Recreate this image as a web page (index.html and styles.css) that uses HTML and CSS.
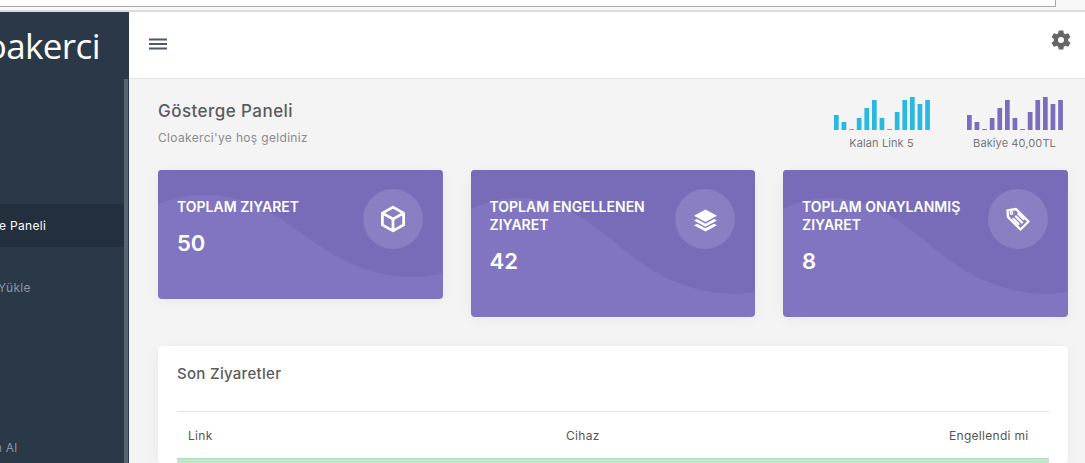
FILE: index.html
```html
<!DOCTYPE html>
<html lang="tr">
<head>
    <meta charset="UTF-8">
    <meta name="viewport" content="width=device-width, initial-scale=1.0">
    <title>Gösterge Paneli</title>
    <link rel="stylesheet" href="styles.css">
</head>
<body>
    <div class="url-strip"><div class="url-box"></div></div>
    <div class="app">
        <aside class="sidebar">
            <div class="sidebar-inner">
                <div class="logo">Cloakerci</div>
                <nav class="menu">
                    <a class="menu-item active" href="#">Gösterge Paneli</a>
                    <a class="menu-item" href="#">Bakiye Yükle</a>
                    <a class="menu-item menu-last" href="#">Link Satın Al</a>
                </nav>
            </div>
            <div class="scroll-thumb"></div>
        </aside>
        <div class="main">
            <header class="topbar">
                <svg class="menu-icon" viewBox="0 0 18 12" width="18" height="12">
                    <path d="M0 1.500h18M0 6h18M0 10.500h18" stroke="#4f5866" stroke-width="1.800"/>
                </svg>
                <svg class="gear-icon" viewBox="0 0 24 24" width="24" height="24">
                    <path fill="#666" fill-rule="evenodd" d="M19.140 12.940c.04-.3.06-.61.06-.94 0-.32-.02-.64-.07-.94l2.030-1.580a.49.49 0 0 0 .12-.61l-1.920-3.320a.49.49 0 0 0-.59-.22l-2.390.96c-.5-.38-1.030-.7-1.620-.94l-.36-2.540a.48.48 0 0 0-.48-.41h-3.840a.48.48 0 0 0-.47.41l-.36 2.540c-.59.24-1.130.57-1.620.94l-2.390-.96a.48.48 0 0 0-.59.22L2.740 8.870a.47.47 0 0 0 .12.61l2.030 1.580c-.05.3-.09.63-.09.94s.02.64.07.94l-2.030 1.580a.49.49 0 0 0-.12.61l1.920 3.320c.12.22.37.29.59.22l2.390-.96c.5.38 1.030.7 1.620.94l.36 2.540c.05.24.24.41.48.41h3.840c.24 0 .44-.17.47-.41l.36-2.540c.59-.24 1.130-.56 1.620-.94l2.390.96c.22.08.47 0 .59-.22l1.920-3.320a.47.47 0 0 0-.12-.61l-2.010-1.580zM12 15a3 3 0 1 1 0-6 3 3 0 0 1 0 6z"/>
                </svg>
            </header>
            <main class="content">
                <div class="page-head">
                    <div>
                        <h1 class="page-title">Gösterge Paneli</h1>
                        <p class="page-sub">Cloakerci'ye hoş geldiniz</p>
                    </div>
                    <div class="head-stats">
                        <div class="mini-stat">
                            <svg class="bars bars-blue" viewBox="0 0 96 33" width="96" height="33">
                                <path d="M0 18h4.700v15H0zM7.600 25h4.700v8H7.600zM15.200 32h4.700v1h-4.700zM22.800 21h4.700v12h-4.700zM30.400 11h4.700v22h-4.700zM38 3h4.700v30H38zM45.600 21h4.700v12h-4.700zM53.200 32h4.700v1h-4.700zM60.800 15h4.700v18h-4.700zM68.400 3h4.700v30h-4.700zM76 0h4.700v33H76zM83.600 7h4.700v26h-4.700zM91.200 3h4.700v30h-4.700z"/>
                            </svg>
                            <span class="mini-label">Kalan Link 5</span>
                        </div>
                        <div class="mini-stat">
                            <svg class="bars bars-purple" viewBox="0 0 96 33" width="96" height="33">
                                <path d="M0 18h4.700v15H0zM7.600 25h4.700v8H7.600zM15.200 32h4.700v1h-4.700zM22.800 21h4.700v12h-4.700zM30.400 11h4.700v22h-4.700zM38 3h4.700v30H38zM45.600 21h4.700v12h-4.700zM53.200 32h4.700v1h-4.700zM60.800 15h4.700v18h-4.700zM68.400 3h4.700v30h-4.700zM76 0h4.700v33H76zM83.600 7h4.700v26h-4.700zM91.200 3h4.700v30h-4.700z"/>
                            </svg>
                            <span class="mini-label">Bakiye 40,00TL</span>
                        </div>
                    </div>
                </div>

                <section class="cards">
                    <div class="card">
                        <svg class="wave" viewBox="0 0 284 129" preserveAspectRatio="none">
                            <path d="M0 34C25 24 50 22 75 28C120 38 145 70 185 90C215 105 250 112 284 103V0H0Z"/>
                        </svg>
                        <div class="card-text">
                            <h3 class="card-title">TOPLAM ZIYARET</h3>
                            <div class="card-value">50</div>
                        </div>
                        <div class="card-icon">
                            <svg viewBox="0 0 24 24" width="30" height="30" fill="none" stroke="#fff" stroke-width="2.200" stroke-linejoin="round">
                                <path d="M12 2.500l8.500 4.800v9.400L12 21.500l-8.500-4.800V7.300zM3.500 7.300L12 12l8.500-4.700M12 12v9.500"/>
                            </svg>
                        </div>
                    </div>
                    <div class="card">
                        <svg class="wave" viewBox="0 0 284 129" preserveAspectRatio="none">
                            <path d="M0 34C25 24 50 22 75 28C120 38 145 70 185 90C215 105 250 112 284 107V0H0Z"/>
                        </svg>
                        <div class="card-text">
                            <h3 class="card-title">TOPLAM ENGELLENEN ZIYARET</h3>
                            <div class="card-value">42</div>
                        </div>
                        <div class="card-icon">
                            <svg viewBox="0 0 24 24" width="25" height="25" fill="#fff">
                                <path d="M12 2.500L23 8.500l-11 6-11-6z"/>
                                <path d="M3.800 11.600L1 13l11 6 11-6-2.800-1.400L12 16z"/>
                                <path d="M3.800 16.100L1 17.500l11 6 11-6-2.800-1.400L12 20.500z"/>
                            </svg>
                        </div>
                    </div>
                    <div class="card">
                        <svg class="wave" viewBox="0 0 284 129" preserveAspectRatio="none">
                            <path d="M0 34C25 24 50 22 75 28C120 38 145 70 185 90C215 105 250 112 284 107V0H0Z"/>
                        </svg>
                        <div class="card-text">
                            <h3 class="card-title">TOPLAM ONAYLANMIŞ ZIYARET</h3>
                            <div class="card-value">8</div>
                        </div>
                        <div class="card-icon">
                            <svg viewBox="0 0 26 26" width="26" height="26" fill="none" stroke="#fff" stroke-width="2.400" stroke-linejoin="round" stroke-linecap="round">
                                <path d="M2.500 4.500l8.500-1.500 12.500 12.500-8 8L3 11z"/>
                                <path d="M11 10.500l6 6M8.500 13l5 5M13.500 8l5 5"/>
                                <circle cx="6.500" cy="7" r="0.700"/>
                            </svg>
                        </div>
                    </div>
                </section>

                <section class="panel">
                    <h4 class="panel-title">Son Ziyaretler</h4>
                    <table class="visits">
                        <thead>
                            <tr>
                                <th class="col-link">Link</th>
                                <th class="col-device">Cihaz</th>
                                <th class="col-blocked">Engellendi mi</th>
                            </tr>
                        </thead>
                        <tbody>
                            <tr class="row-ok"><td colspan="3"></td></tr>
                        </tbody>
                    </table>
                </section>
            </main>
        </div>
    </div>
</body>
</html>
```

FILE: styles.css
```css
html, body {
    height: 463px;
    overflow: hidden;
}
body {
    margin: 0;
    font-family: Inter, "Open Sans", sans-serif;
    background: #f4f4f4;
    color: #555;
}
.url-strip {
    height: 10px;
    background: #f8f8f8;
    border-bottom: 2px solid #dcdcdc;
}
.url-box {
    width: 1055px;
    height: 6px;
    background: #fff;
    border-bottom: 1px solid #a9a9a9;
    border-right: 1px solid #a9a9a9;
}
.app {
    display: flex;
    height: 451px;
}

/* sol menu */
.sidebar {
    position: relative;
    flex: 0 0 129px;
    background: #2a3848;
    overflow: hidden;
}
.sidebar-inner {
    margin-left: -79px;
    width: 204px;
}
.logo {
    font-family: "Open Sans", sans-serif;
    font-size: 35px;
    line-height: 48px;
    color: #fff;
    padding: 10px 0 0 35px;
    letter-spacing: -0.6px;
    white-space: nowrap;
}
.menu {
    display: flex;
    flex-direction: column;
    padding-top: 134px;
}
.menu-item {
    display: block;
    font-size: 12px;
    line-height: 43px;
    letter-spacing: 0.3px;
    color: #8b96a1;
    text-decoration: none;
    padding-left: 34px;
    white-space: nowrap;
}
.menu-item.active {
    color: #fff;
    background: #232f3c;
    padding-left: 31px;
}
.menu-item + .menu-item {
    margin-top: 19px;
}
.menu-item.menu-last {
    margin-top: 117px;
    padding-left: 23px;
}
.scroll-thumb {
    position: absolute;
    top: 67px;
    right: 0;
    bottom: 0;
    width: 5px;
    background: #596570;
    border-right: 1px solid #2a3848;
    box-sizing: border-box;
}

/* ust bar */
.main {
    flex: 1;
    min-width: 0;
}
.topbar {
    display: flex;
    align-items: center;
    justify-content: space-between;
    height: 67px;
    box-sizing: border-box;
    padding: 0 12px 2px 20px;
    background: #fff;
    border-bottom: 1px solid #e6e6e6;
}
.gear-icon {
    margin-top: -8px;
}
.content {
    padding: 0 17.5px 0 29px;
}
.page-head {
    display: flex;
    justify-content: space-between;
    height: 91px;
}
.page-title {
    margin: 22px 0 0;
    font-size: 17px;
    line-height: 21px;
    font-weight: 500;
    letter-spacing: 0.45px;
    color: #5a5a60;
}
.page-sub {
    margin: 8px 0 0;
    font-size: 12px;
    line-height: 16px;
    letter-spacing: 0.33px;
    color: #8a8a8f;
}
.head-stats {
    display: flex;
    gap: 37px;
    padding: 18px 5px 0 0;
}
.mini-stat {
    display: flex;
    flex-direction: column;
    align-items: center;
}
.bars-blue { fill: #2bb8e0; }
.bars-purple { fill: #7b6dbb; }
.mini-label {
    margin-top: 6px;
    font-size: 11px;
    line-height: 15px;
    letter-spacing: 0.1px;
    color: #77777c;
    white-space: nowrap;
}

/* kartlar */
.cards {
    display: grid;
    grid-template-columns: repeat(3, 1fr);
    gap: 28px;
    align-items: start;
    margin-bottom: 29px;
}
.card {
    position: relative;
    display: flex;
    justify-content: space-between;
    box-sizing: border-box;
    padding: 19px 20px 0 19px;
    min-height: 129px;
    border-radius: 4px;
    background: #8175c1;
    color: #fff;
    overflow: hidden;
    box-shadow: 0 2px 14px rgba(0, 0, 0, 0.05);
}
.wave {
    position: absolute;
    inset: 0;
    width: 100%;
    height: 100%;
    fill: #786cb9;
}
.card-text {
    position: relative;
    width: 178px;
    padding: 9px 0 41px;
}
.card-title {
    margin: 0;
    font-size: 14px;
    line-height: 18px;
    font-weight: 600;
}
.card-value {
    margin-top: 12px;
    font-size: 22px;
    line-height: 30px;
    font-weight: 600;
}
.card-icon {
    position: relative;
    display: flex;
    align-items: center;
    justify-content: center;
    width: 60px;
    height: 60px;
    border-radius: 50%;
    background: rgba(255, 255, 255, 0.13);
}

/* son ziyaretler */
.panel {
    background: #fff;
    border-radius: 4px;
    padding: 18px 19px 0;
    box-shadow: 0 2px 14px rgba(0, 0, 0, 0.05);
}
.panel-title {
    margin: 0 0 27px;
    font-size: 15px;
    line-height: 20px;
    font-weight: 500;
    letter-spacing: 0.3px;
    color: #5a5a60;
}
.visits {
    width: 100%;
    border-collapse: collapse;
    table-layout: fixed;
    font-size: 12px;
}
.visits th {
    font-weight: 400;
    letter-spacing: 0.3px;
    color: #555;
    height: 46px;
    padding: 0 11px;
    border-top: 1px solid #e0e0e0;
}
.col-link { text-align: left; width: 356px; }
.col-device { text-align: left; }
.visits .col-blocked { text-align: right; padding-right: 20px; }
.row-ok td {
    height: 4px;
    padding: 0;
    background: #c3e6cb;
    border-top: 1px solid #b1dcbb;
}
```
